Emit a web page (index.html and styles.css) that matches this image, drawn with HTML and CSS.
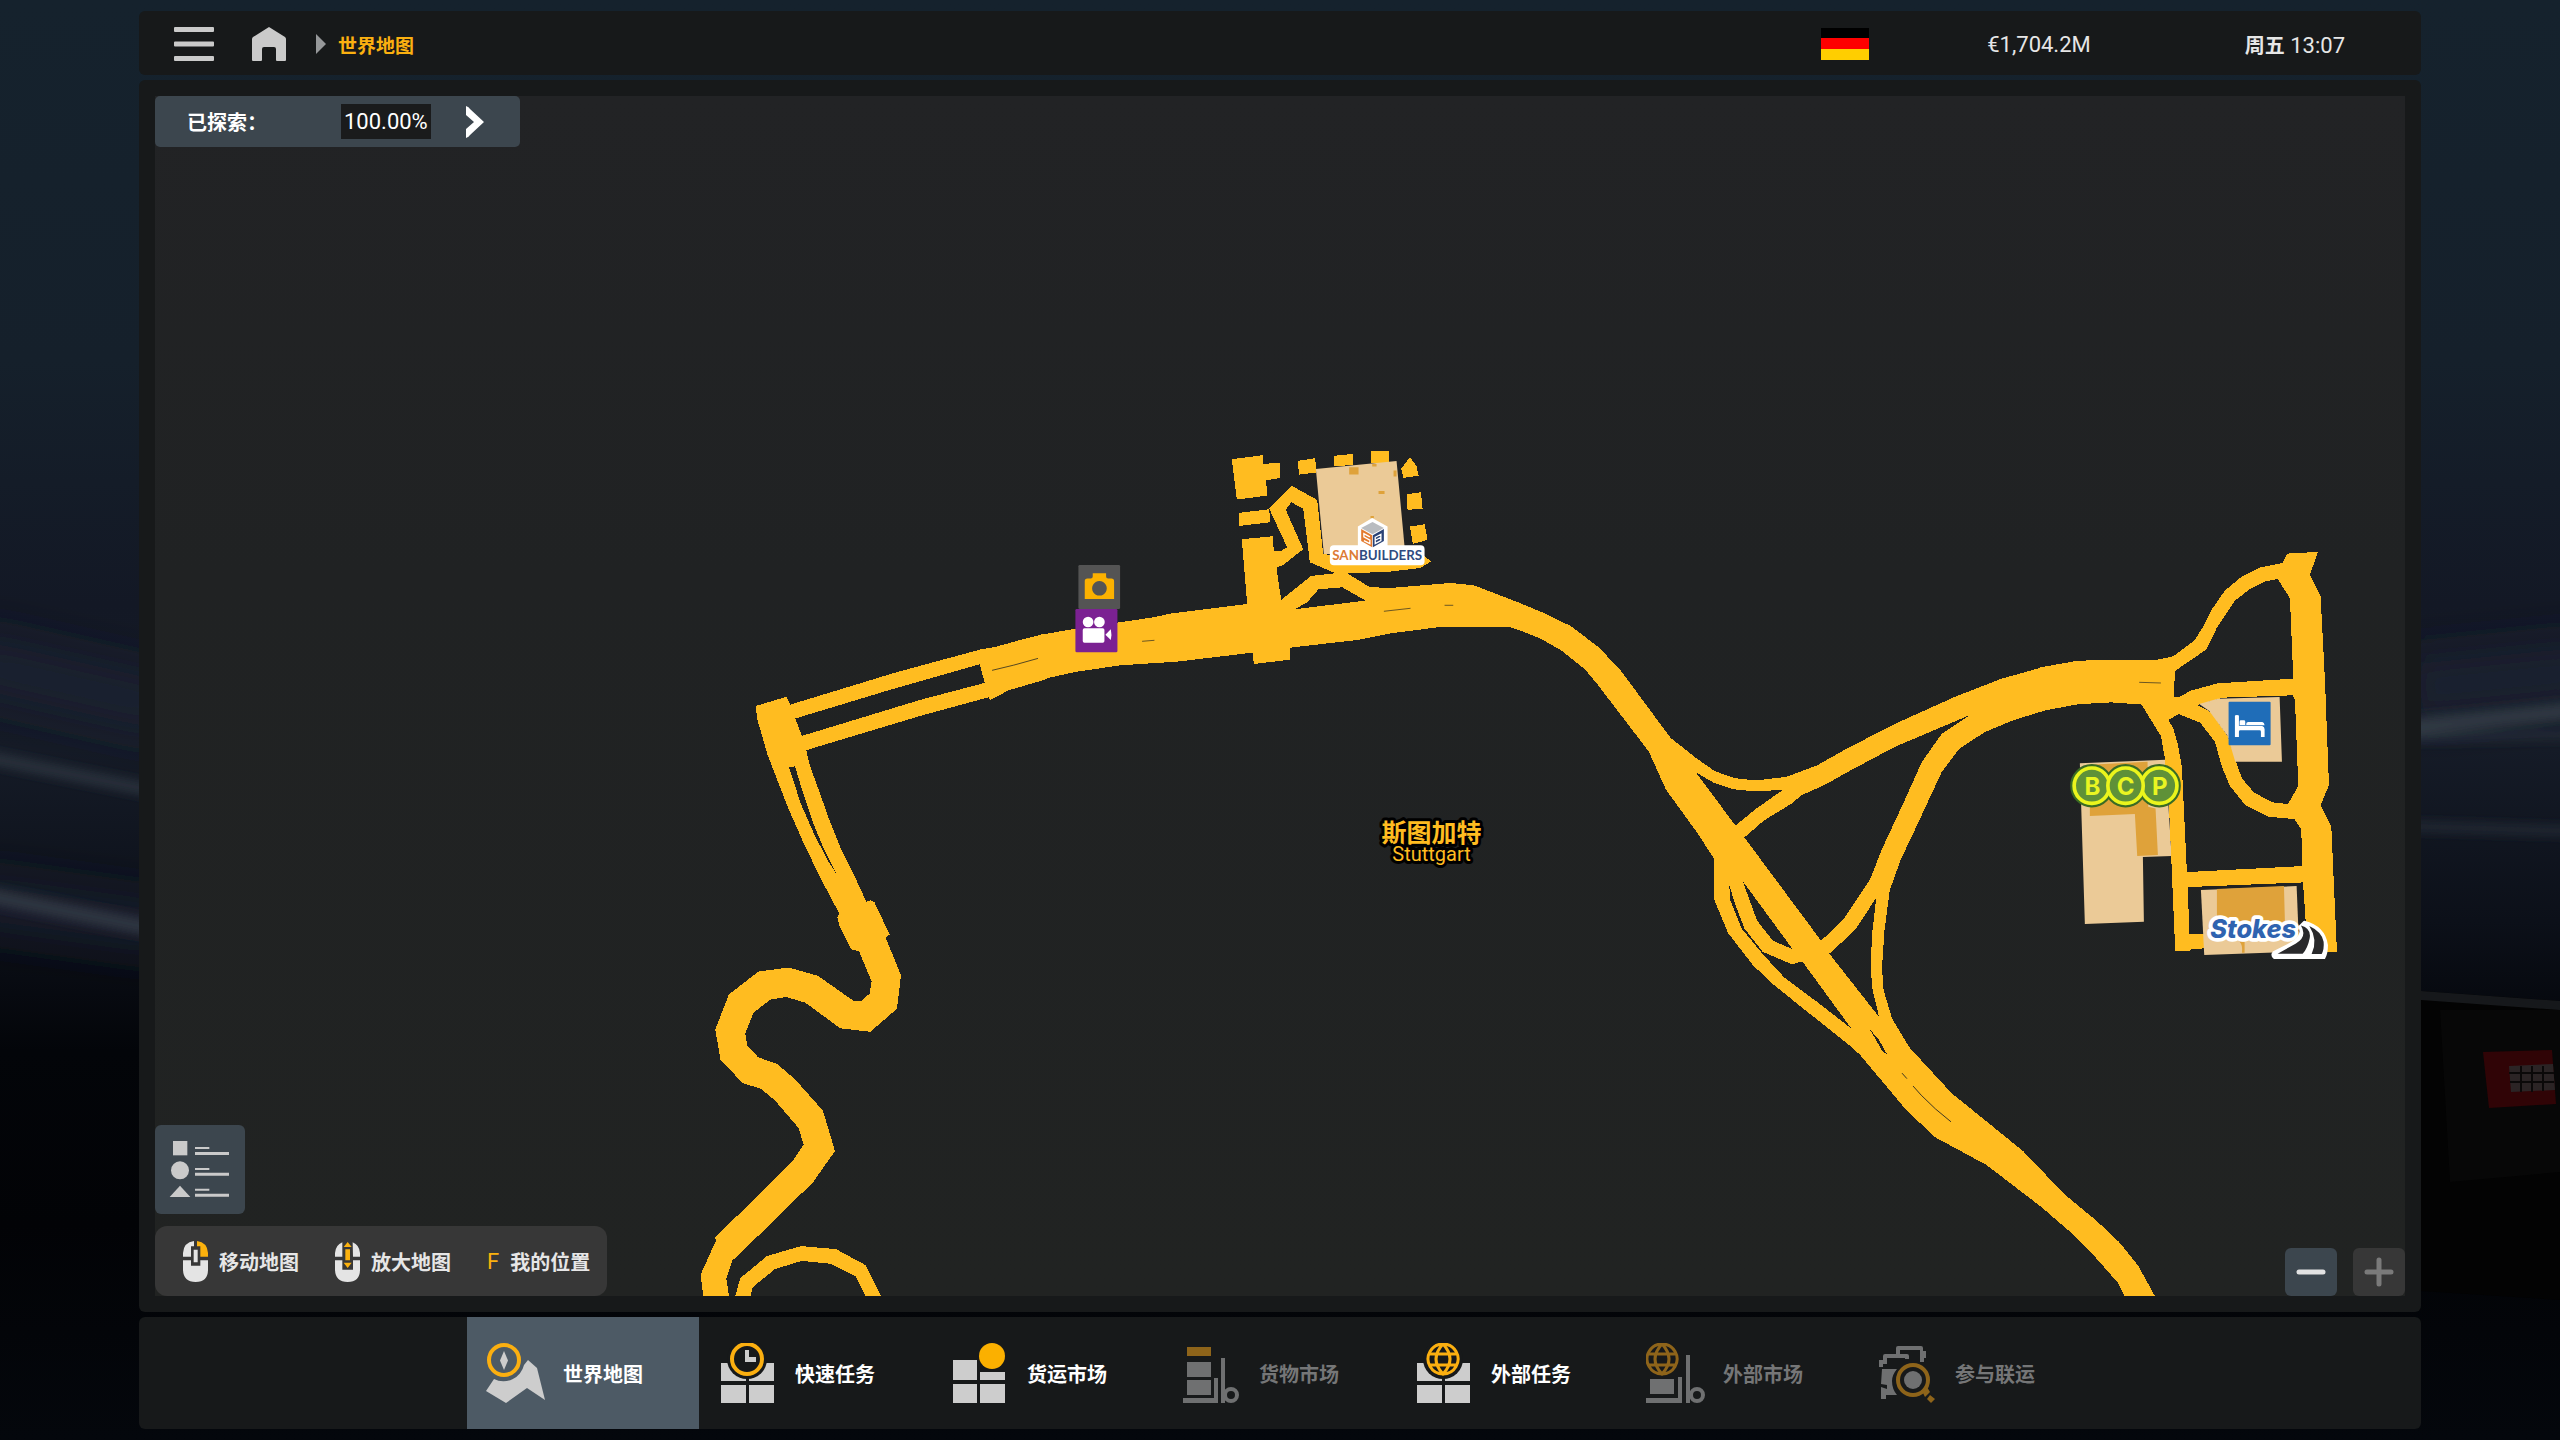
FILE: index.html
```html
<!DOCTYPE html>
<html lang="zh-CN">

<head>
    <meta charset="UTF-8">
    <title>世界地图</title>
    <link rel="stylesheet" href="styles.css">
</head>

<body>
    <!-- Garage scene behind the panels -->
    <svg class="scene" viewBox="0 0 2560 1440" preserveAspectRatio="none" aria-hidden="true">
        <defs>
            <filter id="soft" x="-20%" y="-50%" width="140%" height="200%"><feGaussianBlur stdDeviation="6"/></filter>
            <filter id="softer" x="-20%" y="-50%" width="140%" height="200%"><feGaussianBlur stdDeviation="24"/></filter>
        </defs>
        <g filter="url(#softer)" fill="none" stroke="#1a2230">
            <path d="M-40 660 L180 710" stroke-width="50"/>
            <path d="M2400 690 L2600 670" stroke-width="50"/>
            <path d="M-40 900 L180 930" stroke-width="40"/>
        </g>
        <g filter="url(#soft)" fill="none" stroke="#333a45">
            <path d="M-40 752 L180 796" stroke-width="9"/>
            <path d="M-40 890 L180 934" stroke-width="14"/>
            <path d="M2400 728 L2600 708" stroke-width="16"/>
            <path d="M2400 738 L2600 734" stroke-width="5"/>
            <path d="M2400 826 L2600 832" stroke-width="5"/>
        </g>
        <path d="M2421 991 L2560 1001 V1300 L2421 1291z" fill="#030303"/>
        <path d="M2421 991 L2560 1001 V1010 L2421 1000z" fill="#16181b"/>
        <path d="M2440 1010 H2560 V1172 L2450 1182z" fill="#070707"/>
        <path d="M2483 1052 L2552 1050 L2556 1104 L2489 1108z" fill="#300406"/>
        <path d="M2509 1066 L2553 1064 L2555 1090 L2511 1092z" fill="#2b2425"/>
        <path d="M2509 1073H2554M2510 1082H2554M2521 1066V1092M2532 1066V1092M2543 1066V1091" stroke="#0b0909" stroke-width="2"/>
    </svg>

    <div class="shell">
        <header class="topbar">
            <button class="icon-btn" type="button" aria-label="菜单">
                <svg width="40" height="34" viewBox="0 0 40 34"><path d="M1 0h38q1 0 1 1v3q0 1-1 1H1q-1 0-1-1V1q0-1 1-1zM1 14.500h38q1 0 1 1v3q0 1-1 1H1q-1 0-1-1v-3q0-1 1-1zM1 29h38q1 0 1 1v3q0 1-1 1H1q-1 0-1-1v-3q0-1 1-1z"/></svg>
            </button>
            <a class="home" href="#" aria-label="主页">
                <svg width="34" height="34" viewBox="0 0 34 34"><path d="M17 0L33 10q1 1 1 2v21q0 1-1 1H25q-1 0-1-1V22q0-2-2-2H12q-2 0-2 2v11q0 1-1 1H1q-1 0-1-1V12q0-1 1-2z"/></svg>
            </a>
            <svg class="crumb-arrow" width="10" height="20" viewBox="0 0 10 20"><path d="M0 0L10 10L0 20z"/></svg>
            <a class="crumb" href="#">世界地图</a>
            <svg class="flag" width="48" height="32" viewBox="0 0 48 32" role="img" aria-label="德国">
                <rect width="48" height="11" fill="#000"/>
                <rect y="10" width="48" height="11" fill="#fe0000"/>
                <rect y="21" width="48" height="11" fill="#ffce00"/>
            </svg>
            <span class="money">€1,704.2M</span>
            <span class="clock"><b>周五</b> 13:07</span>
        </header>

        <main class="panel">
            <div class="map">
                <svg class="map-canvas" viewBox="155 96 2249 1200" preserveAspectRatio="xMidYMid slice">
                    <!-- Main roads, west -->
                    <svg class="tile" x="680" y="640" width="440" height="680" viewBox="0 0 1320 1568" preserveAspectRatio="none">
                        <path class="road" d="M227 152L318 131L330 149L650 74L900 22L945 16L1020 0L1090 -14L1100 90L985 116L930 138L925 132L720 175L378 254L388 288L415 345L445 410L485 487L520 540L558 603L570 600L582 604L628 679L616 686L662 773L650 850L570 903L480 895L375 836L318 823L270 829L220 859L195 907L201 935L234 962L290 977L345 1013L428 1085L464 1178L398 1250L165 1425L158 1427L138 1472L147 1515V1540H69V1512L61 1463L108 1383L104 1378L150 1343L335 1203L370 1163L355 1125L285 1062L243 1035L187 1021L121 968L105 898L146 817L235 764L325 755L413 774L518 831H545L568 815L574 787L536 717L512 713L478 660L471 638L478 632L420 548L370 468L325 390L262 265L230 180z
                            M345 181L620 117L898 56L913 99L720 138L365 221z
                            M326 294L344 291L365 345L400 425L430 480L467 538L440 505L400 445L362 378z"/>
                        <path class="road" d="M160 1530L165 1512L180 1471L260 1420L362 1397L467 1404L556 1441L604 1515V1530H560L556 1512L526 1467L452 1438L365 1431L284 1450L217 1492L210 1515V1530z"/>
                        <path class="gap" d="M935 70L1000 58L1075 42"/>
                    </svg>

                    <!-- Motorway, east -->
                    <svg class="tile" x="1600" y="600" width="640" height="720" viewBox="0 0 1568 1568" preserveAspectRatio="none">
                        <path class="road" d="M-6 102L48 152L171 300L235 345L280 373L330 388L380 393L455 385L530 360L600 325L720 270L870 210L980 172L1075 148L1160 135L1210 131H1360V228H1330L1250 223L1170 227L1090 240L1010 262L940 288L878 324L835 375L775 490L735 565L708 632L695 720L689 800L693 850L714 912L757 975L860 1074L1035 1200L1135 1293L1215 1352L1270 1398L1317 1450L1357 1515V1530H1292L1283 1515L1268 1488L1218 1437L1162 1385L1080 1322L945 1230L820 1170L750 1112L635 990L610 970L490 885L420 835L373 795L312 725L277 650V562L235 505L160 413L118 330L-6 186z
                            M233 375L275 397L325 412L380 417L447 413L380 455L330 491z
                            M352 517L400 480L470 442L490 426L550 402L610 372L720 320L903 251L835 292L787 352L740 445L690 540L660 608L597 692L540 742z
                            M348 612L470 760L422 742L383 698z
                            M315 622L332 668L352 715L397 766L468 793L494 787L614 933L530 875L450 822L400 774L345 715L318 655z
                            M560 770L597 740L628 712L675 648L665 725L661 800L666 850L682 908z
                            M660 936L680 955L702 990L690 982z"/>
                        <path class="gap" d="M765 1058L785 1078L820 1108L858 1136M1318 179L1372 181M738 1030L750 1042"/>
                    </svg>

                    <!-- Sanbuilders yard and the motorway below it -->
                    <svg class="tile" x="1040" y="430" width="480" height="260" viewBox="0 0 1440 780">
                        <path class="road" d="M-6 616L105 596L340 562L390 551L620 522L604 328L696 319L700 363H722L740 352L686 236L754 168L830 210L848 371L880 378H1150L1172 394L1140 414L1040 426L920 430L985 470L1040 475L1230 459L1300 466L1440 520L1509 549L1590 588L1656 638L1680 657L1740 725V853L1680 774L1632 717L1560 660L1500 626L1440 602L1408 591H1200L1050 610L950 630L750 653L749 689L640 702L636 668L410 695L240 706L110 725L-6 750z
                            M736 240L752 217L788 236L808 397L885 430L812 438L722 510L708 413L728 405L788 358z
                            M762 538L800 517L834 478L905 472L975 512z"/>
                        <path class="road" d="M574 88L666 76L668 102L717 99L720 144L677 151L680 197L589 209zM594 249L686 238L690 277L597 288zM771 93L824 85L828 128L776 134zM879 78L936 72L939 105L882 109zM990 63H1046V98H990zM1108 82L1128 108L1134 137L1089 144L1082 117zM1098 193L1141 187L1146 236L1101 240zM1108 290L1152 283L1161 330L1117 342z"/>
                        <path class="gap" d="M1030 544L1110 535M1212 526H1238M305 634L342 631"/>
                        <path class="lot" d="M826 117L1068 93L1092 350V372H850z"/>
                        <path class="building" d="M926 112h28v22h-28zM995 102h13v8h-13zM1059 122h9v18h-9zM1014 183h18v9h-18zM990 258h10v6h-10z"/>

                        <!-- Photo spot -->
                        <rect x="114" y="405" width="125" height="132" rx="4" fill="#545454"/>
                        <path fill="#fbb100" fill-rule="evenodd" d="M157 430H197V440Q197 446 203 446H213Q221 446 221 454V507H133V454Q133 446 141 446H151Q157 446 157 440zM177 453a22 22 0 1 0 .1 0z"/>
                        <!-- Viewpoint -->
                        <rect x="105" y="537" width="126" height="130" rx="4" fill="#7b2192"/>
                        <g fill="#fff">
                            <circle cx="143" cy="576" r="16"/>
                            <circle cx="177" cy="576" r="16"/>
                            <rect x="127" y="595" width="65" height="43" rx="5"/>
                            <path d="M195 614L211 598Q215 614 211 630z"/>
                        </g>

                        <!-- Sanbuilders logo -->
                        <path d="M995 264L1041 290V346H1140Q1152 346 1152 358V394Q1152 406 1140 406H880Q868 406 868 394V358Q868 346 880 346H952V290z" fill="#fff"/>
                        <path d="M996 276L1030 294L996 313L962 294z" fill="#b9bcc0"/>
                        <path d="M962 297L995 316V352L962 333z" fill="#e37a2e"/>
                        <path d="M1030 297L997 316V352L1030 333z" fill="#2a4377"/>
                        <path d="M988 321L970 311V321L988 331V341L970 332M1004 322L1021 313V332L1004 341zM1004 331L1021 322" fill="none" stroke="#fff" stroke-width="4"/>
                        <text class="brand-san" x="1010" y="391" text-anchor="middle"><tspan fill="#dd7b35">SAN</tspan><tspan fill="#2f4a80">BUILDERS</tspan></text>
                    </svg>

                    <!-- Industrial district -->
                    <svg class="tile" x="2040" y="540" width="380" height="430" viewBox="0 0 1140 1290">
                        <path class="lot" d="M117 670L374 659L392 948L306 951L309 1145L132 1152z"/>
                        <path class="building" d="M147 674L320 665L322 800L344 805L351 945L289 948L282 822L147 828z"/>
                        <path class="road" d="M-6 383L100 364L160 360L350 359L397 349L460 302L487 260L513 208L552 152L600 112L660 82L725 69L738 41L831 36L807 104L839 170L852 420L864 735L839 796L871 860L888 1236H797V1225H485L450 1228L445 1233H403L384 790L372 655L360 588L307 502L300 493L215 487L120 491L60 500L-6 516z
                            M402 393L497 328L527 265L555 222L582 182L630 145L675 124L710 117L747 175L757 416L530 430L450 452L413 472L399 470z
                            M470 495L545 473L755 466L762 478L772 738L741 792L695 787L640 758L603 715L580 650L560 588L510 517z
                            M382 540L413 522L478 548L522 605L543 680L567 738L613 795L683 830L760 837L781 868L784 978L438 996L423 680L410 610L396 562z
                            M441 1041L786 1027L797 1182H445z"/>
                        <path class="gap" d="M295 427L360 429"/>
                        <path class="lot" d="M475 492L530 476L716 471L723 665H583L560 588L505 513z"/>
                        <path class="lot" d="M480 1050L767 1038L775 1234L490 1245z"/>
                        <path class="building" d="M528 1047L729 1038L732 1150H528zM596 1205Q606 1215 603 1238H611V1205z"/>

                        <!-- Motel -->
                        <rect x="563" y="485" width="126" height="131" rx="3" fill="#1f6db8"/>
                        <path fill="#fff" d="M582 527Q582 525 588 525T594 527V555H596V545Q596 541 600 541H609Q613 541 613 545V555H616V551Q616 546 622 546H664Q670 547 671 556H594V558H664Q671 560 671 568V591H660V575Q660 571 656 571H598Q594 571 594 575V591H582z"/>

                        <!-- BCP logo -->
                        <g fill="#4f8a2d" stroke="#3a6b24" stroke-width="6">
                            <circle cx="153" cy="737" r="62"/><circle cx="355" cy="737" r="62"/><circle cx="254" cy="737" r="62"/>
                        </g>
                        <g fill="#5f9138" stroke="#ebf51c" stroke-width="11">
                            <circle cx="153" cy="737" r="53"/><circle cx="355" cy="737" r="53"/><circle cx="254" cy="737" r="53"/>
                        </g>
                        <g class="brand-bcp" text-anchor="middle">
                            <text x="155" y="764">B</text><text x="254" y="764">C</text><text x="357" y="764">P</text>
                        </g>

                        <!-- Stokes logo -->
                        <path d="M790 1145Q850 1160 858 1215Q858 1240 850 1254H700Q690 1245 698 1236L740 1215Q790 1190 775 1160z" fill="#fff" stroke="#fff" stroke-width="6" stroke-linejoin="round"/>
                        <path d="M780 1156Q812 1165 806 1195Q800 1225 785 1241H710L765 1210Q800 1190 780 1156z" fill="#29292b"/>
                        <path d="M805 1158Q842 1175 848 1205Q850 1228 842 1242H812Q832 1200 805 1158z" fill="#29292b"/>
                        <text class="brand-stokes" x="508" y="1193">Stokes</text>
                    </svg>

                    <!-- City label -->
                    <g class="city" text-anchor="middle">
                        <text class="city-name" x="1431" y="842">斯图加特</text>
                        <text class="city-latin" x="1431" y="861">Stuttgart</text>
                    </g>
                </svg>

                <button class="explored" type="button">
                    <span class="explored-label">已探索：</span>
                    <span class="explored-value">100.00%</span>
                    <svg width="18" height="32" viewBox="0 0 18 32"><path d="M0 0Q3 1 4 3L18 16L4 29Q3 31 0 32V23L8 16L0 9z"/></svg>
                </button>

                <div class="map-bottom">
                    <div class="map-tools">
                        <button class="legend" type="button" aria-label="图例">
                            <svg width="90" height="89" viewBox="0 0 270 267">
                                <rect x="54" y="48" width="43" height="43"/>
                                <circle cx="75" cy="136" r="27"/>
                                <path d="M44 216L75 182L106 216z"/>
                                <path d="M120 66h43v6h-43zM120 81h102v9H120zM120 129h43v6h-43zM120 143h102v9H120zM120 191h43v6h-43zM120 206h102v9H120z"/>
                            </svg>
                        </button>
                        <div class="hints">
                            <span class="hint">
                                <svg width="25" height="41" viewBox="0 0 75 123">
                                    <path fill="#e4e4e4" d="M33 0V16H24V47H0V36Q2 4 33 0zM0 58H24V74H52V58H75V86Q75 123 38 123T0 86zM32 26h12v38H32z"/>
                                    <path fill="#fbb10d" d="M42 0Q73 4 75 36V47H52V16H42z"/>
                                </svg>
                                移动地图
                            </span>
                            <span class="hint">
                                <svg width="25" height="41" viewBox="0 0 75 123">
                                    <path fill="#e4e4e4" d="M22 4V47H0V36Q2 12 22 4zM53 4Q73 12 75 36V47H54zM0 58H22V86H54V58H75V86Q75 123 38 123T0 86z"/>
                                    <path fill="#fbb10d" d="M38 3L50 18H26zM31 25H45V58H31zM26 65H50L38 81z"/>
                                </svg>
                                放大地图
                            </span>
                            <span class="hint"><kbd>F</kbd>我的位置</span>
                        </div>
                    </div>
                    <div class="zoom">
                        <button class="zoom-btn" type="button" aria-label="缩小">
                            <svg width="30" height="30" viewBox="0 0 30 30"><path d="M3 15H27"/></svg>
                        </button>
                        <button class="zoom-btn" type="button" aria-label="放大" disabled>
                            <svg width="30" height="30" viewBox="0 0 30 30"><path d="M3 15H27M15 3V27"/></svg>
                        </button>
                    </div>
                </div>
            </div>
        </main>

        <nav class="tabs">
            <a class="tab active" href="#">
                <svg width="60" height="60" viewBox="0 0 60 60">
                    <path d="M8 36A21 21 0 0 0 38 22L42 17L51 25L59 57L41 45L20 60L0 48z"/>
                    <path d="M18 8L22 17.500L18 27L14 17.500z"/>
                    <circle class="ring" cx="18" cy="17" r="15"/>
                </svg>
                世界地图
            </a>
            <a class="tab" href="#">
                <svg width="60" height="60" viewBox="0 0 60 60">
                    <path d="M3 20H28V38H3zM31 20H56V38H31zM3 42H28V60H3zM31 42H56V60H31z"/>
                    <circle class="cut" cx="29" cy="16" r="20"/>
                    <path d="M27 7H31V14H38V19H27z"/>
                    <circle class="ring" cx="29" cy="16" r="15"/>
                </svg>
                快速任务
            </a>
            <a class="tab" href="#">
                <svg width="60" height="60" viewBox="0 0 60 60">
                    <path d="M3 17H27V37H3zM30 29H55V37H30zM3 41H27V60H3zM30 41H55V60H30z"/>
                    <circle class="accent" cx="42" cy="13" r="13"/>
                </svg>
                货运市场
            </a>
            <a class="tab disabled" href="#">
                <svg width="60" height="60" viewBox="0 0 60 60">
                    <path class="accent" d="M5 4H29V13H5z"/>
                    <path d="M5 19H29V34H5zM5 37H29V52H5zM1 55H32V35H36V60H1zM39 15H43V60H39z"/>
                    <circle class="wheel" cx="49" cy="52" r="6"/>
                </svg>
                货物市场
            </a>
            <a class="tab" href="#">
                <svg width="60" height="60" viewBox="0 0 60 60">
                    <path d="M3 20H28V38H3zM31 20H56V38H31zM3 42H28V60H3zM31 42H56V60H31z"/>
                    <circle class="cut" cx="29" cy="16" r="20"/>
                    <path class="globe" d="M29 1a15 15 0 1 0 .1 0zM29 1Q15 16 29 31Q43 16 29 1M16 11H42M16 22H42"/>
                </svg>
                外部任务
            </a>
            <a class="tab disabled" href="#">
                <svg width="60" height="60" viewBox="0 0 60 60">
                    <path class="globe" d="M16 1a15 15 0 1 0 .1 0zM16 1Q2 16 16 31Q30 16 16 1M3 11H29M3 22H29"/>
                    <path d="M4 36H28V51H4zM0 55H32V34H36V60H0zM40 12H44V60H40z"/>
                    <circle class="wheel" cx="51" cy="52" r="6"/>
                </svg>
                外部市场
            </a>
            <a class="tab disabled" href="#">
                <svg width="60" height="60" viewBox="0 0 60 60">
                    <path d="M18 5Q18 3 20 3H43Q45 3 45 5V8H48V15H46V19H42V7H22V11H18zM5 13Q5 11 7 11H29Q31 11 31 13V16H27V15H9V21H5V24H1V17H5zM4 26H19Q14 32 14 38Q14 46 19 52H8V56H3V44L9 46V42L3 41z"/>
                    <circle class="ring" cx="35" cy="37" r="15"/>
                    <circle cx="35" cy="37" r="9"/>
                    <path class="accent" d="M44 48L49 44L52 49L47 54zM52 52L57 56L53 60L49 56z"/>
                </svg>
                参与联运
            </a>
        </nav>
    </div>
</body>

</html>
```
FILE: styles.css
```css
* { box-sizing: border-box; }
body {
    margin: 0;
    font-family: Roboto, "Noto Sans CJK SC", sans-serif;
    font-size: 20px;
    color: #e6e6e6;
    background: linear-gradient(#15222d 0%, #15202b 25%, #131825 42%, #151b27 52%, #0c1019 64%, #030509 73%, #020306 85%, #04070c 100%);
}
a { color: inherit; text-decoration: none; }
button { margin: 0; padding: 0; border: 0; background: none; font: inherit; color: inherit; cursor: pointer; }
svg { display: block; flex: none; }

.scene { position: absolute; top: 0; left: 0; width: 100%; height: 100%; }

.shell {
    position: relative;
    display: flex;
    flex-direction: column;
    gap: 5px;
    height: 100vh;
    padding: 11px 139px;
}

/* Top bar */
.topbar {
    display: flex;
    align-items: center;
    height: 64px;
    padding: 2px 76px 0 35px;
    background: #17191a;
    border-radius: 6px;
    fill: #cacaca;
}
.home { margin-left: 38px; }
.crumb-arrow { margin: 0 12px 0 30px; fill: #96989a; }
.crumb { color: #fbb010; font-size: 19px; font-weight: 700; }
.flag { margin-left: auto; }
.money { margin-left: 118px; font-size: 22px; }
.clock { margin-left: 154px; font-size: 22px; }
.clock b { font-size: 20px; }

/* Map */
.panel {
    flex: 1;
    display: flex;
    min-height: 0;
    padding: 16px;
    background: #17191a;
    border-radius: 6px;
}
.map {
    position: relative;
    flex: 1;
    display: flex;
    flex-direction: column;
    align-items: flex-start;
    justify-content: space-between;
    background: linear-gradient(#222325, #202223 40%, #212322);
}
.map-canvas { position: absolute; top: 0; left: 0; width: 100%; height: 100%; }
.tile { overflow: visible; }
.road { fill: #ffbc20; fill-rule: evenodd; shape-rendering: crispEdges; }
.gap { fill: none; stroke: #212322; stroke-width: 2; }
.lot { fill: #ebca97; }
.building { fill: #dfa23a; }

.brand-san { font: 700 40px Lato, sans-serif; }
.brand-bcp { font: 700 72px Inter, sans-serif; fill: #e9f522; }
.brand-stokes {
    font: italic 800 76px Inter, sans-serif;
    fill: #2f63b0;
    stroke: #fff;
    stroke-width: 22px;
    stroke-linejoin: round;
    paint-order: stroke;
}
.city { fill: #ffbc20; stroke: #000; stroke-width: 6px; stroke-linejoin: round; paint-order: stroke; }
.city-name { font-size: 25px; font-weight: 700; }
.city-latin { font-size: 20px; }

.explored {
    position: relative;
    display: flex;
    align-items: center;
    height: 51px;
    padding: 0 36px 0 32px;
    color: #fff;
    fill: #fff;
    background: #3c464e;
    border-radius: 5px;
}
.explored-label {
    width: 154px;
    font-family: Roboto, "Noto Sans CJK TC", sans-serif;
    font-weight: 700;
    text-align: left;
}
.explored-value {
    margin-right: 35px;
    padding: 0 3px;
    font-size: 22px;
    line-height: 35px;
    background: #1a1b1c;
}

.map-bottom {
    position: relative;
    display: flex;
    align-items: flex-end;
    justify-content: space-between;
    width: 100%;
}
.map-tools { display: flex; flex-direction: column; align-items: flex-start; gap: 12px; }
.legend { background: #3c464e; border-radius: 6px; fill: #cacaca; }
.hints {
    display: flex;
    align-items: center;
    gap: 36px;
    height: 70px;
    padding: 0 17px 0 28px;
    background: #373737;
    border-radius: 12px;
}
.hint { display: flex; align-items: center; gap: 11px; font-weight: 700; }
.hint kbd { font: 400 22px Roboto, sans-serif; color: #fbb10d; }
.zoom { display: flex; gap: 16px; }
.zoom-btn {
    display: flex;
    align-items: center;
    justify-content: center;
    width: 52px;
    height: 48px;
    background: #3c464e;
    border-radius: 6px;
}
.zoom-btn path { fill: none; stroke: #e2e2e2; stroke-width: 5; stroke-linecap: round; }
.zoom-btn:disabled { background: #373737; }
.zoom-btn:disabled path { stroke: #7a7a7a; }

/* Bottom tabs */
.tabs {
    display: flex;
    justify-content: center;
    height: 112px;
    padding-right: 2px;
    background: #17191a;
    border-radius: 6px;
}
.tab {
    display: flex;
    align-items: center;
    gap: 17px;
    width: 232px;
    padding-left: 19px;
    color: #fff;
    font-weight: 700;
    fill: #cdcdcd;
}
.tab.active { background: #4d5a65; }
.tab.disabled { color: #757677; fill: #6f7071; }
.tab .accent { fill: #fbb000; }
.tab .ring { fill: none; stroke: #fbaf10; stroke-width: 4; }
.tab .globe { fill: none; stroke: #fbaf10; stroke-width: 3; }
.tab .cut { fill: #17191a; }
.tab .wheel { fill: none; stroke: #6f7071; stroke-width: 4; }
.tab.disabled .accent { fill: #8e641a; }
.tab.disabled .ring,
.tab.disabled .globe { stroke: #8e641a; }
```
